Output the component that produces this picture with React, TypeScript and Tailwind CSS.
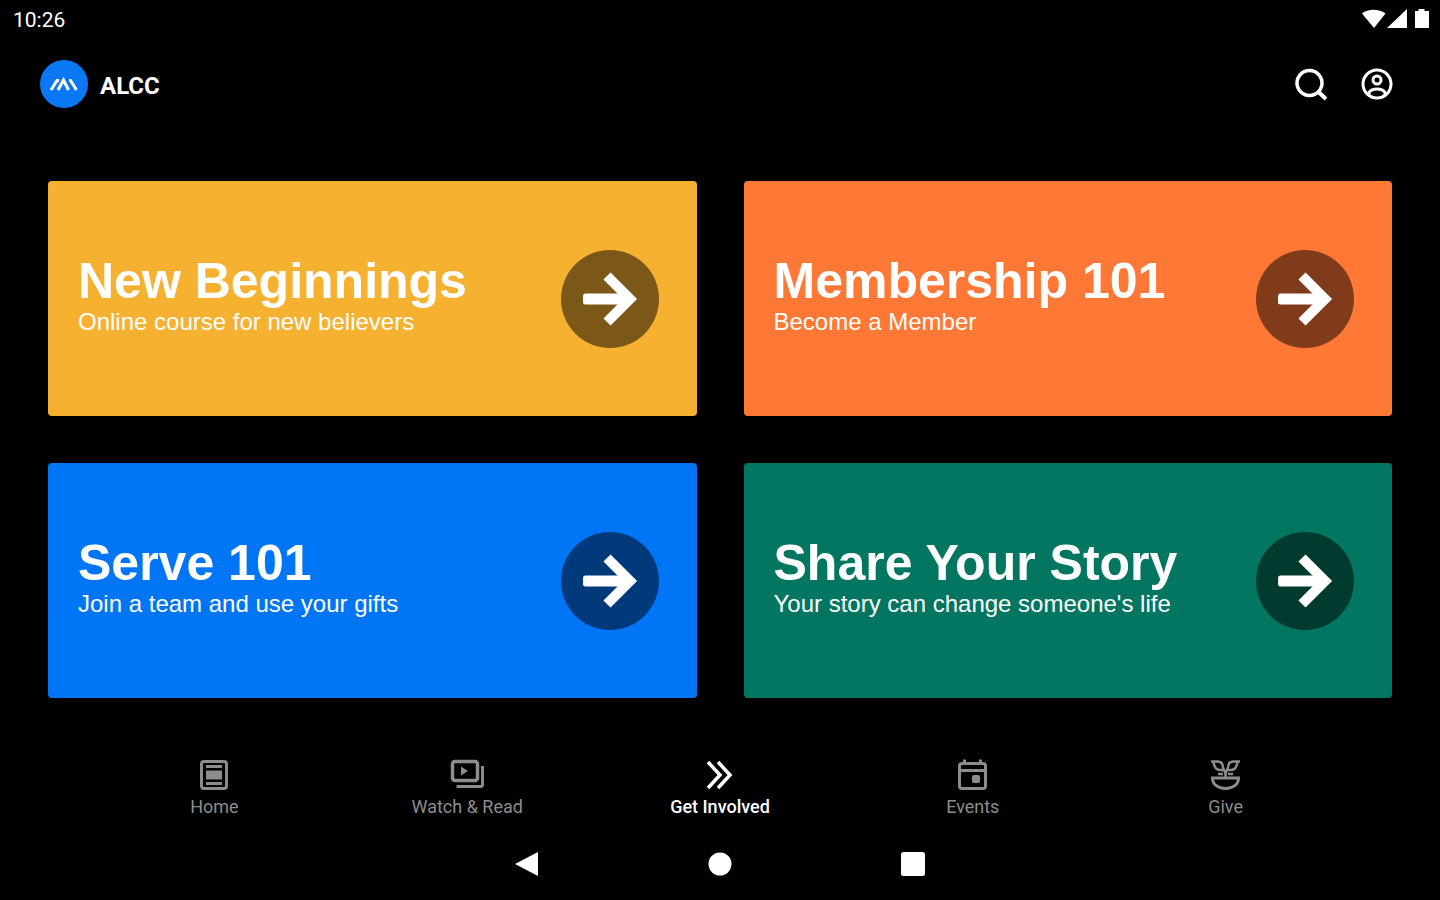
import type { ReactNode } from "react";

const cards = [
    { title: "New Beginnings", text: "Online course for new believers", color: "bg-[#f6b131]", circle: "bg-[#7b5818]" },
    { title: "Membership 101", text: "Become a Member", color: "bg-[#ff7835]", circle: "bg-[#803c1a]" },
    { title: "Serve 101", text: "Join a team and use your gifts", color: "bg-[#0075f6]", circle: "bg-[#003a7b]" },
    { title: "Share Your Story", text: "Your story can change someone's life", color: "bg-[#027660]", circle: "bg-[#013b30]" },
];

const tabs: { label: string; icon: ReactNode; active?: boolean }[] = [
    {
        label: "Home",
        icon: (
            <>
                <rect x="4.5" y="3.5" width="25" height="27" rx="2.5" strokeWidth="3" />
                <path d="M9 8.5h16M9 25.5h16" strokeWidth="3" />
                <rect x="9" y="12.5" width="16" height="9" fill="currentColor" stroke="none" />
            </>
        ),
    },
    {
        label: "Watch & Read",
        icon: (
            <>
                <rect x="2.5" y="3.5" width="25" height="19" rx="2.5" strokeWidth="3.5" />
                <path d="M32.5 8v18.5q0 2-2 2H6.500" strokeWidth="3" />
                <path d="M11 8.500v9l7-4.500z" fill="currentColor" stroke="none" />
            </>
        ),
    },
    {
        label: "Get Involved",
        active: true,
        icon: <path d="M5 4l12 13L5 30M15 4l12 13-12 13" strokeWidth="3.5" />,
    },
    {
        label: "Events",
        icon: (
            <>
                <rect x="3.500" y="5.500" width="26" height="25" rx="2.500" strokeWidth="3" />
                <path d="M3.500 12.500h26M8.500 1.500v4M24.500 1.500v4" strokeWidth="3" />
                <rect x="16" y="17" width="8" height="8" rx="2" fill="currentColor" stroke="none" />
            </>
        ),
    },
    {
        label: "Give",
        icon: (
            <>
                <path d="M3.500 20h26c0 6.500-5.500 10.500-13 10.500S3.500 26.500 3.500 20z" strokeWidth="3" />
                <path d="M16.500 20v-4M9 16h5M19 16h5" strokeWidth="2.500" />
                <path d="M2 3.500h6c4 0 6 2.500 6 6l2.500 6M14 12h-3c-4 0-6-3.500-6.500-8.500M31 3.500h-6c-4 0-6 2.500-6 6l-2.500 6M19 12h3c4 0 6-3.500 6.500-8.500" strokeWidth="2.500" />
            </>
        ),
    },
];

function StatusBar() {
    return (
        <div className="flex h-10 items-center justify-between pl-[13px] pr-2.5 text-[21px] leading-none">
            <span>10:26</span>
            <svg width="70" height="22" viewBox="0 0 70 22" fill="currentColor" aria-hidden="true">
                <path d="M2 4.500C8-.5 19-.5 25.500 4.500L14 19z" />
                <path d="M27 19L47 0v19z" />
                <path d="M55 2h3.500V0h6v2H69v17H55z" />
            </svg>
        </div>
    );
}

function Header() {
    return (
        <header className="flex items-center justify-between px-10 pt-5">
            <div className="flex items-center gap-3">
                <svg width="48" height="48" viewBox="0 0 48 48" aria-hidden="true">
                    <circle cx="24" cy="24" r="24" fill="#0a78f5" />
                    <path d="M11 30l6-9.500h2M18 30l5.500-10 5 10M29 20.500h1.500l6 9.500" fill="none" stroke="#fff" strokeWidth="3" />
                </svg>
                <h1 className="pt-1 text-2xl font-bold">ALCC</h1>
            </div>
            <div className="flex items-center gap-[30px] pr-[5px]">
                <button type="button" aria-label="Search">
                    <svg width="36" height="36" viewBox="0 0 36 36" fill="none" stroke="currentColor" strokeWidth="3.500">
                        <circle cx="16.500" cy="17" r="12.500" />
                        <path d="M25.500 26l7.500 7" strokeWidth="4" />
                    </svg>
                </button>
                <button type="button" aria-label="Account">
                    <svg width="36" height="36" viewBox="0 0 36 36" fill="none" stroke="currentColor" strokeWidth="3">
                        <circle cx="18" cy="18" r="14" />
                        <circle cx="18" cy="14" r="4" />
                        <path d="M10 29v-2.500c2-3 5-3.500 8-3.500s6 .5 8 3.500V29" />
                    </svg>
                </button>
            </div>
        </header>
    );
}

export default function App() {
    return (
        <div className="flex min-h-screen flex-col bg-black font-[Roboto,sans-serif] text-white">
            <StatusBar />
            <Header />
            <main className="grid flex-1 auto-rows-fr grid-cols-2 gap-[47px] px-12 pt-[73px]">
                {cards.map((card) => (
                    <a
                        key={card.title}
                        href="#"
                        className={`flex min-h-48 items-center justify-between rounded pl-[30px] pr-[38px] font-['Liberation_Sans',sans-serif] ${card.color}`}
                    >
                        <div className="pb-1">
                            <h2 className="text-[50px] leading-[50px] font-bold">{card.title}</h2>
                            <p className="text-2xl leading-8">{card.text}</p>
                        </div>
                        <span className={`flex size-[98px] shrink-0 items-center justify-center rounded-full ${card.circle}`}>
                            <svg width="56" height="56" viewBox="0 0 56 56" fill="none" stroke="#fff" aria-hidden="true">
                                <rect x="1" y="22.500" width="46" height="11" rx="2.500" fill="#fff" stroke="none" />
                                <path d="M25 5l23 23-23 23" strokeWidth="10" />
                            </svg>
                        </span>
                    </a>
                ))}
            </main>
            <nav className="grid grid-cols-5 px-[88px] pt-[60px]">
                {tabs.map((tab) => (
                    <a
                        key={tab.label}
                        href="#"
                        className={`flex flex-col items-center gap-[3px] text-lg leading-6 ${tab.active ? "font-medium text-white" : "text-[#8c8c8c]"}`}
                    >
                        <svg width="34" height="34" viewBox="0 0 34 34" fill="none" stroke="currentColor" aria-hidden="true">
                            {tab.icon}
                        </svg>
                        {tab.label}
                    </a>
                ))}
            </nav>
            <div className="flex h-[81px] items-center justify-center gap-[167px] pt-2">
                <button type="button" aria-label="Back">
                    <svg width="26" height="26" viewBox="0 0 26 26" fill="currentColor">
                        <path d="M1 13L24 1v24z" />
                    </svg>
                </button>
                <button type="button" aria-label="Home screen">
                    <svg width="26" height="26" viewBox="0 0 26 26" fill="currentColor">
                        <circle cx="13" cy="13" r="11.500" />
                    </svg>
                </button>
                <button type="button" aria-label="Recent apps">
                    <svg width="26" height="26" viewBox="0 0 26 26" fill="currentColor">
                        <rect x="1" y="1" width="24" height="24" rx="2.500" />
                    </svg>
                </button>
            </div>
        </div>
    );
}
